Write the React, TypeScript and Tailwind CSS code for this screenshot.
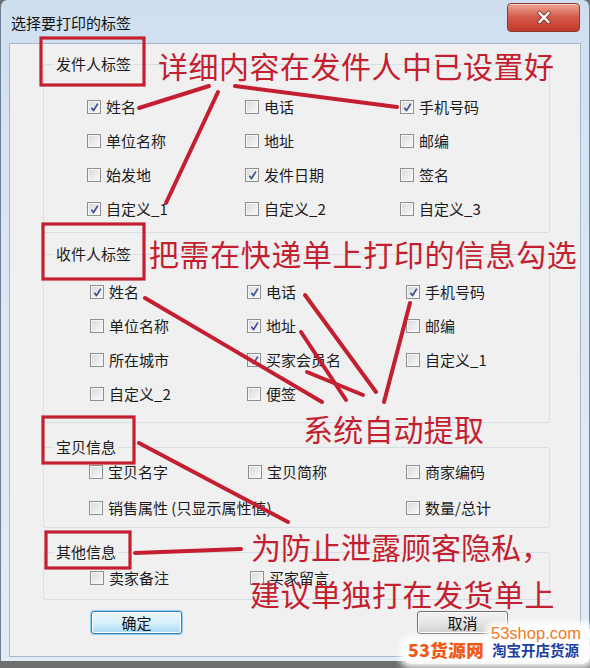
import React from 'react';

const CJK = "font-['Noto_Sans_CJK_SC','Liberation_Sans',sans-serif]";

type Item = { label: string; checked?: boolean; wide?: boolean } | null;

function CheckBox({ checked }: { checked?: boolean }) {
  return (
    <span className="flex h-[14px] w-[14px] shrink-0 items-center justify-center border border-[#8e8f8f] bg-gradient-to-br from-[#d8d8d8] to-[#fbfbfb] shadow-[inset_0_0_0_1px_#f6f6f6]">
      {checked && (
        <svg viewBox="0 0 12 12" className="h-[11px] w-[11px]">
          <path d="M2.6 6.2 L4.9 9.4 L9.6 1.8" fill="none" stroke="#3b4f91" strokeWidth="1.9" strokeLinejoin="round" />
        </svg>
      )}
    </span>
  );
}

function Cell({ item }: { item: Item }) {
  if (!item) return <div />;
  return (
    <div className={`flex items-center gap-[5px] ${item.wide ? 'col-span-2' : ''}`}>
      <CheckBox checked={item.checked} />
      <span className="text-[15px] leading-[20px] text-[#1b1b1b] whitespace-nowrap">{item.label}</span>
    </div>
  );
}

const sender: Item[] = [
  { label: '姓名', checked: true }, { label: '电话' }, { label: '手机号码', checked: true },
  { label: '单位名称' }, { label: '地址' }, { label: '邮编' },
  { label: '始发地' }, { label: '发件日期', checked: true }, { label: '签名' },
  { label: '自定义_1', checked: true }, { label: '自定义_2' }, { label: '自定义_3' },
];

const receiver: Item[] = [
  { label: '姓名', checked: true }, { label: '电话', checked: true }, { label: '手机号码', checked: true },
  { label: '单位名称' }, { label: '地址', checked: true }, { label: '邮编' },
  { label: '所在城市' }, { label: '买家会员名', checked: true }, { label: '自定义_1' },
  { label: '自定义_2' }, { label: '便签' }, null,
];

const goods: Item[] = [
  { label: '宝贝名字' }, { label: '宝贝简称' }, { label: '商家编码' },
  { label: '销售属性 (只显示属性值)', wide: true }, { label: '数量/总计' },
];

const other: Item[] = [{ label: '卖家备注' }, { label: '买家留言' }];

function Caption({ text }: { text: string }) {
  return (
    <div className="-mt-[11px] ml-[10px] w-fit bg-[#f0f0f0] px-[2px] text-[15px] leading-[20px] text-[#1b1b1b]">{text}</div>
  );
}

const lines: [number, number, number, number][] = [
  [139, 108, 209, 86],
  [218, 92, 166, 203],
  [235, 86, 397, 107],
  [145, 298, 322, 402],
  [301, 332, 346, 400],
  [305, 295, 376, 392],
  [307, 372, 363, 395],
  [410, 303, 384, 402],
  [139, 443, 288, 522],
  [135, 553, 241, 549],
];

const boxes: [number, number, number, number][] = [
  [41, 38, 103, 47],
  [43, 224, 101, 55],
  [43, 417, 91, 46],
  [46, 532, 84, 36],
];

export default function App() {
  return (
    <div className={`relative h-[668px] w-[590px] overflow-hidden bg-[#6e6e6e] ${CJK}`}>
      <div className="flex h-[661px] flex-col rounded-t-[7px] border-l border-r border-[#6f7f92] bg-gradient-to-b from-[#cfdff0] via-[#dde8f4] to-[#e1ebf6]">
        {/* title bar */}
        <div className="flex h-[43px] shrink-0 items-start justify-between">
          <span className="mt-[13px] ml-[10px] text-[15px] leading-[20px] text-[#111]">选择要打印的标签</span>
          <button className="mt-[3px] mr-[9px] flex h-[29px] w-[73px] items-center justify-center rounded-[4px] border border-[#8c3a2e] bg-gradient-to-b from-[#eaa594] via-[#d4584a] to-[#c23a2c] shadow-[inset_0_1px_0_rgba(255,255,255,0.5)]">
            <svg viewBox="0 0 16 14" className="h-[13px] w-[16px]">
              <path d="M3 2 L13 12 M13 2 L3 12" stroke="#6b2219" strokeWidth="4.2" strokeLinecap="round" />
              <path d="M3 2 L13 12 M13 2 L3 12" stroke="#ffffff" strokeWidth="2.6" strokeLinecap="round" />
            </svg>
          </button>
        </div>

        {/* client area */}
        <div className="mx-[8px] flex h-[614px] flex-col border border-[#a7b7ca] bg-[#f0f0f0]">
          <div className="mt-[20px] ml-[33px] w-[507px] rounded-[3px] border border-[#d5dfe5] pb-[6px]">
            <Caption text="发件人标签" />
            <div className="mt-[16px] grid grid-cols-[158px_155px_1fr] auto-rows-[34px] pl-[43px]">
              {sender.map((it, i) => <Cell key={i} item={it} />)}
            </div>
          </div>

          <div className="mt-[21px] ml-[33px] w-[507px] rounded-[3px] border border-[#d5dfe5] pb-[11px]">
            <Caption text="收件人标签" />
            <div className="mt-[11px] grid grid-cols-[157px_159px_1fr] auto-rows-[34px] pl-[46px]">
              {receiver.map((it, i) => <Cell key={i} item={it} />)}
            </div>
          </div>

          <div className="mt-[24px] ml-[33px] w-[507px] rounded-[3px] border border-[#d5dfe5] pb-[4px]">
            <Caption text="宝贝信息" />
            <div className="grid grid-cols-[159px_158px_1fr] auto-rows-[30px] gap-y-[6px] pl-[45px]">
              {goods.map((it, i) => <Cell key={i} item={it} />)}
            </div>
          </div>

          <div className="mt-[24px] ml-[33px] w-[507px] rounded-[3px] border border-[#d5dfe5] pb-[6px]">
            <Caption text="其他信息" />
            <div className="mt-[1px] grid grid-cols-[160px_1fr] auto-rows-[30px] pl-[46px]">
              {other.map((it, i) => <Cell key={i} item={it} />)}
            </div>
          </div>

          <div className="mt-[11px] flex">
            <button className="ml-[81px] h-[23px] w-[91px] rounded-[3px] border border-[#3c7fb1] bg-gradient-to-b from-[#eaf6fd] via-[#d9f0fc] to-[#a7d9f5] text-[15px] leading-[20px] text-[#111] shadow-[0_0_0_1px_#8fd0f2,inset_0_0_0_1px_#ffffff]">确定</button>
            <button className="ml-[235px] h-[23px] w-[91px] rounded-[3px] border border-[#707070] bg-gradient-to-b from-[#f2f2f2] via-[#e6e6e6] to-[#cfcfcf] text-[15px] leading-[20px] text-[#111] shadow-[inset_0_0_0_1px_#fbfbfb]">取消</button>
          </div>
        </div>
      </div>

      {/* red annotations laid over the screenshot */}
      <svg className="pointer-events-none absolute left-0 top-0" width="590" height="668">
        {boxes.map(([x, y, w, h], i) => (
          <rect key={i} x={x} y={y} width={w} height={h} fill="none" stroke="#c41f30" strokeWidth="3.2" />
        ))}
        {lines.map(([x1, y1, x2, y2], i) => (
          <line key={i} x1={x1} y1={y1} x2={x2} y2={y2} stroke="#c41f30" strokeWidth="4" strokeLinecap="round" />
        ))}
      </svg>
      <span className="pointer-events-none absolute left-[158px] top-[50px] text-[30px] leading-[30px] tracking-[0.5px] whitespace-nowrap text-[#c41f30]">详细内容在发件人中已设置好</span>
      <span className="pointer-events-none absolute left-[149px] top-[238px] text-[30px] leading-[30px] tracking-[0.6px] whitespace-nowrap text-[#c41f30]">把需在快递单上打印的信息勾选</span>
      <span className="pointer-events-none absolute left-[303px] top-[413px] text-[30px] leading-[30px] tracking-[0.2px] whitespace-nowrap text-[#c41f30]">系统自动提取</span>
      <span className="pointer-events-none absolute left-[251px] top-[531px] text-[30px] leading-[30px] whitespace-nowrap text-[#c41f30]">为防止泄露顾客隐私，</span>
      <span className="pointer-events-none absolute left-[250px] top-[578px] text-[30px] leading-[30px] tracking-[0.5px] whitespace-nowrap text-[#c41f30]">建议单独打在发货单上</span>

      {/* watermark */}
      <div className="pointer-events-none absolute left-[489px] top-[625px] h-[17px] w-[101px] rounded-[5px] bg-white/95 shadow-[0_0_5px_3px_rgba(255,255,255,0.9)]" />
      <div className="pointer-events-none absolute left-[404px] top-[640px] h-[24px] w-[186px] rounded-[6px] bg-white/95 shadow-[0_0_6px_4px_rgba(255,255,255,0.9)]" />
      <span className="pointer-events-none absolute left-[491px] top-[624px] font-['Liberation_Sans',sans-serif] text-[16.5px] leading-[18px] text-[#ef7a1c]">53shop.com</span>
      <span className="pointer-events-none absolute left-[408px] top-[640px] text-[17.5px] leading-[19px] font-black tracking-[0.5px] text-[#f05a16]">53货源网</span>
      <span className="pointer-events-none absolute left-[492px] top-[641px] text-[14.5px] leading-[18px] font-bold text-[#1d3e9f]">淘宝开店货源</span>
    </div>
  );
}
